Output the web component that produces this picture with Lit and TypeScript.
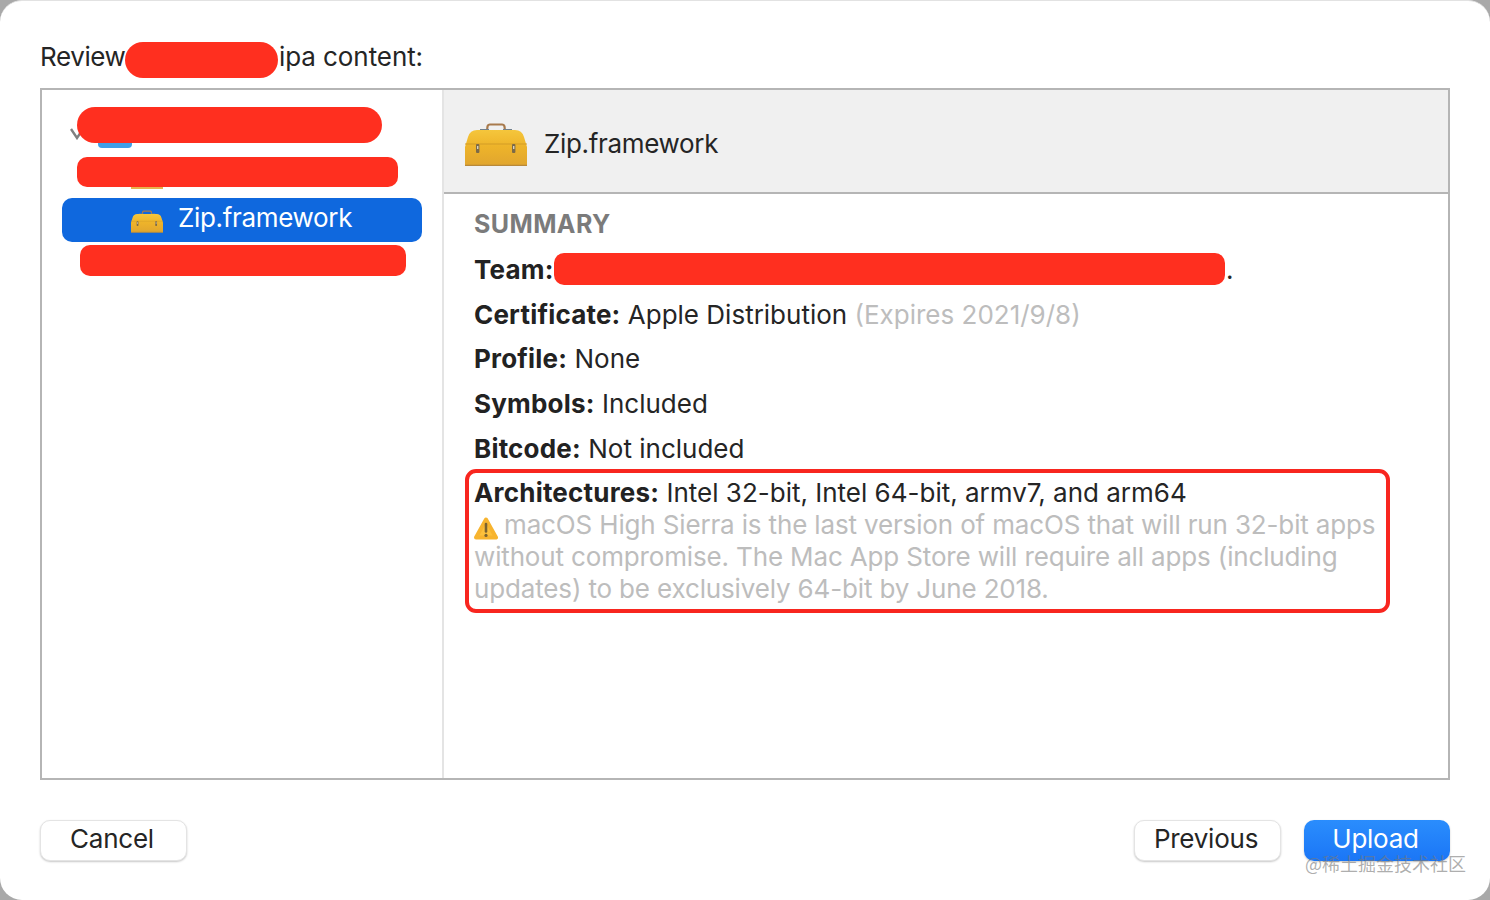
import { LitElement, html, css, svg } from "lit";
import { customElement } from "lit/decorators.js";

const toolbox = (cls: string) => html`<svg class=${cls} viewBox="0 0 62 43">
  <defs>
    <linearGradient id="tb" x1="0" y1="0" x2="0" y2="1">
      <stop offset="0" stop-color="#f5c63c" />
      <stop offset="0.45" stop-color="#eeb42a" />
      <stop offset="1" stop-color="#e0a52f" />
    </linearGradient>
  </defs>
  ${svg`
    <path d="M22 8 L22.5 3.5 Q23 1.5 25 1.5 L37 1.5 Q39 1.5 39.5 3.5 L40 8" fill="none" stroke="#a87a4c" stroke-width="2.2" />
    <path d="M15 7 H24 M38 7 H47" stroke="#70808e" stroke-width="2" />
    <path d="M12 7 H50 Q57 7 59 14 L62 24 V43 H0 V24 L3 14 Q5 7 12 7 Z" fill="url(#tb)" />
    <path d="M0 21 H62" stroke="#d39c26" stroke-width="1" />
    <path d="M0 42.4 H62" stroke="#b8893a" stroke-width="1.2" />
    <rect x="11" y="21" width="3.4" height="9" rx="1" fill="#7b6a48" />
    <rect x="12" y="23" width="1.4" height="3" fill="#d8d2c0" />
    <rect x="47" y="21" width="3.4" height="9" rx="1" fill="#7b6a48" />
    <rect x="48" y="23" width="1.4" height="3" fill="#d8d2c0" />
  `}
</svg>`;

@customElement("app-root")
export class AppRoot extends LitElement {
  static override styles = css`
    :host {
      display: block;
      width: 1490px;
      height: 900px;
      background: #a9a9a9;
      font-family: Inter, "Liberation Sans", sans-serif;
      color: #252525;
      overflow: hidden;
    }
    .window {
      position: relative;
      height: 900px;
      box-sizing: border-box;
      background: #fff;
      border-top: 1px solid #e2e2e2;
      border-radius: 22px;
      padding: 0 40px;
      display: flex;
      flex-direction: column;
    }
    .title {
      position: relative;
      height: 87px;
      padding-top: 40px;
      box-sizing: border-box;
      font-size: 26px;
      line-height: 32px;
      letter-spacing: -0.4px;
    }
    .title-end {
      position: absolute;
      left: 239px;
      letter-spacing: -0.08px;
    }
    .panel {
      display: flex;
      height: 692px;
      box-sizing: border-box;
      border: 2px solid #b5b5b5;
    }
    .side {
      position: relative;
      width: 402px;
      flex: none;
      box-sizing: border-box;
      border-right: 2px solid #e4e4e4;
      padding: 16px 20px 0;
    }
    .row {
      position: relative;
      height: 44px;
      display: flex;
      align-items: center;
      border-radius: 10px;
    }
    .row.sel {
      width: 360px;
      background: #0f68de;
      color: #fff;
      font-size: 26px;
      padding-left: 69px;
      box-sizing: border-box;
      letter-spacing: -0.33px;
    }
    .row.sel span {
      margin-bottom: 5px;
    }
    .tree {
      height: 92px;
      position: relative;
    }
    .small-box {
      width: 32px;
      height: 23px;
      margin: 3px 15px 0 0;
      flex: none;
    }
    .chev {
      position: absolute;
      left: 8px;
      top: 22px;
      width: 14px;
      height: 12px;
    }
    .folder {
      position: absolute;
      left: 36px;
      top: 20px;
      width: 34px;
      height: 22px;
      background: #3f9fe6;
      border-radius: 4px;
    }
    .stub {
      position: absolute;
      left: 69px;
      width: 32px;
      height: 11px;
      background: #e9b34c;
    }
    .mask {
      position: absolute;
      background: #ff2f1f;
    }
    .main {
      flex: 1;
      display: flex;
      flex-direction: column;
    }
    .head {
      height: 104px;
      box-sizing: border-box;
      background: #f0f0f0;
      border-bottom: 2px solid #b5b5b5;
      display: flex;
      align-items: center;
      padding: 4px 0 0 21px;
      font-size: 26px;
      letter-spacing: -0.33px;
    }
    .big-box {
      width: 62px;
      height: 43px;
      margin: 3px 17px 0 0;
    }
    .body {
      position: relative;
      padding: 13px 30px 0;
      font-size: 26px;
      letter-spacing: 0;
    }
    .summary {
      font-size: 25px;
      font-weight: 700;
      color: #7b7b7b;
      line-height: 34px;
      letter-spacing: 0.4px;
      margin-bottom: 7px;
    }
    .line {
      height: 44.7px;
      line-height: 44.7px;
      white-space: nowrap;
    }
    .team {
      position: relative;
    }
    .team-end {
      position: absolute;
      left: 752px;
    }
    .line b {
      font-weight: 700;
      color: #222;
      letter-spacing: 0.2px;
    }
    .muted {
      color: #bdbdbd;
    }
    .note {
      color: #bdbdbd;
      line-height: 32px;
      margin-top: -7px;
      white-space: nowrap;
      letter-spacing: -0.15px;
    }
    .warn {
      width: 24px;
      height: 23px;
      vertical-align: -6px;
      margin-right: 6px;
    }
    .outline {
      position: absolute;
      left: 21px;
      top: 275px;
      width: 925px;
      height: 144px;
      box-sizing: border-box;
      border: 4px solid #f8261f;
      border-radius: 11px;
    }
    .actions {
      display: flex;
      margin-top: 40px;
      gap: 23px;
    }
    .spacer {
      flex: 1;
    }
    .btn {
      width: 147px;
      height: 41px;
      box-sizing: border-box;
      border-radius: 10px;
      background: #fff;
      border: 1px solid #e4e4e4;
      box-shadow: 0 1px 2px rgba(0, 0, 0, 0.22);
      font-size: 26px;
      line-height: 35px;
      text-align: center;
      letter-spacing: -0.25px;
      padding-right: 3px;
    }
    .btn.primary {
      width: 146px;
      border: none;
      line-height: 37px;
      color: #fff;
      background: linear-gradient(#2a8dfd, #1b76f6);
    }
    .mark {
      position: absolute;
      left: 1305px;
      top: 851px;
      font-family: "Noto Sans CJK SC", sans-serif;
      font-size: 18px;
      line-height: 24px;
      color: rgba(120, 120, 120, 0.6);
      white-space: nowrap;
    }
  `;

  override render() {
    return html`
      <div class="window">
        <div class="title">
          Review<span class="mask" style="left:85px;top:41px;width:153px;height:36px;border-radius:18px"></span>
          <span class="title-end">ipa content:</span>
        </div>
        <div class="panel">
          <div class="side">
            <div class="tree">
              <svg class="chev" viewBox="0 0 14 12">
                <path d="M1 1 L7 10 L13 1" fill="none" stroke="#808080" stroke-width="2.4" />
              </svg>
              <div class="folder"></div>
              <div class="stub" style="top:72px"></div>
              <span class="mask" style="left:15px;top:1px;width:305px;height:36px;border-radius:18px"></span>
              <span class="mask" style="left:15px;top:51px;width:321px;height:30px;border-radius:10px"></span>
            </div>
            <div class="row sel">${toolbox("small-box")}<span>Zip.framework</span></div>
            <div class="stub" style="top:166px"></div>
            <span class="mask" style="left:38px;top:155px;width:326px;height:31px;border-radius:10px"></span>
          </div>
          <div class="main">
            <div class="head">${toolbox("big-box")}Zip.framework</div>
            <div class="body">
              <div class="summary">SUMMARY</div>
              <div class="line team">
                <b>Team:</b><span class="mask" style="left:80px;top:5px;width:671px;height:32px;border-radius:10px"></span>
                <span class="team-end">.</span>
              </div>
              <div class="line"><b>Certificate:</b> Apple Distribution <span class="muted">(Expires 2021/9/8)</span></div>
              <div class="line"><b>Profile:</b> None</div>
              <div class="line"><b>Symbols:</b> Included</div>
              <div class="line"><b>Bitcode:</b> Not included</div>
              <div class="line"><b>Architectures:</b> Intel 32-bit, Intel 64-bit, armv7, and arm64</div>
              <div class="note">
                <svg class="warn" viewBox="0 0 24 23">
                  <path d="M12 2.5 L22 20.5 H2 Z" fill="#fcc03c" stroke="#f7b42f" stroke-width="4" stroke-linejoin="round" />
                  <path d="M12 7 V14.5" stroke="#7a6230" stroke-width="2.6" stroke-linecap="round" />
                  <circle cx="12" cy="18.4" r="1.6" fill="#7a6230" />
                </svg>macOS High Sierra is the last version of macOS that will run 32-bit apps<br />
                without compromise. The Mac App Store will require all apps (including<br />
                updates) to be exclusively 64-bit by June 2018.
              </div>
              <div class="outline"></div>
            </div>
          </div>
        </div>
        <div class="actions">
          <div class="btn">Cancel</div>
          <div class="spacer"></div>
          <div class="btn">Previous</div>
          <div class="btn primary">Upload</div>
        </div>
      </div>
      <div class="mark">@稀土掘金技术社区</div>
    `;
  }
}
